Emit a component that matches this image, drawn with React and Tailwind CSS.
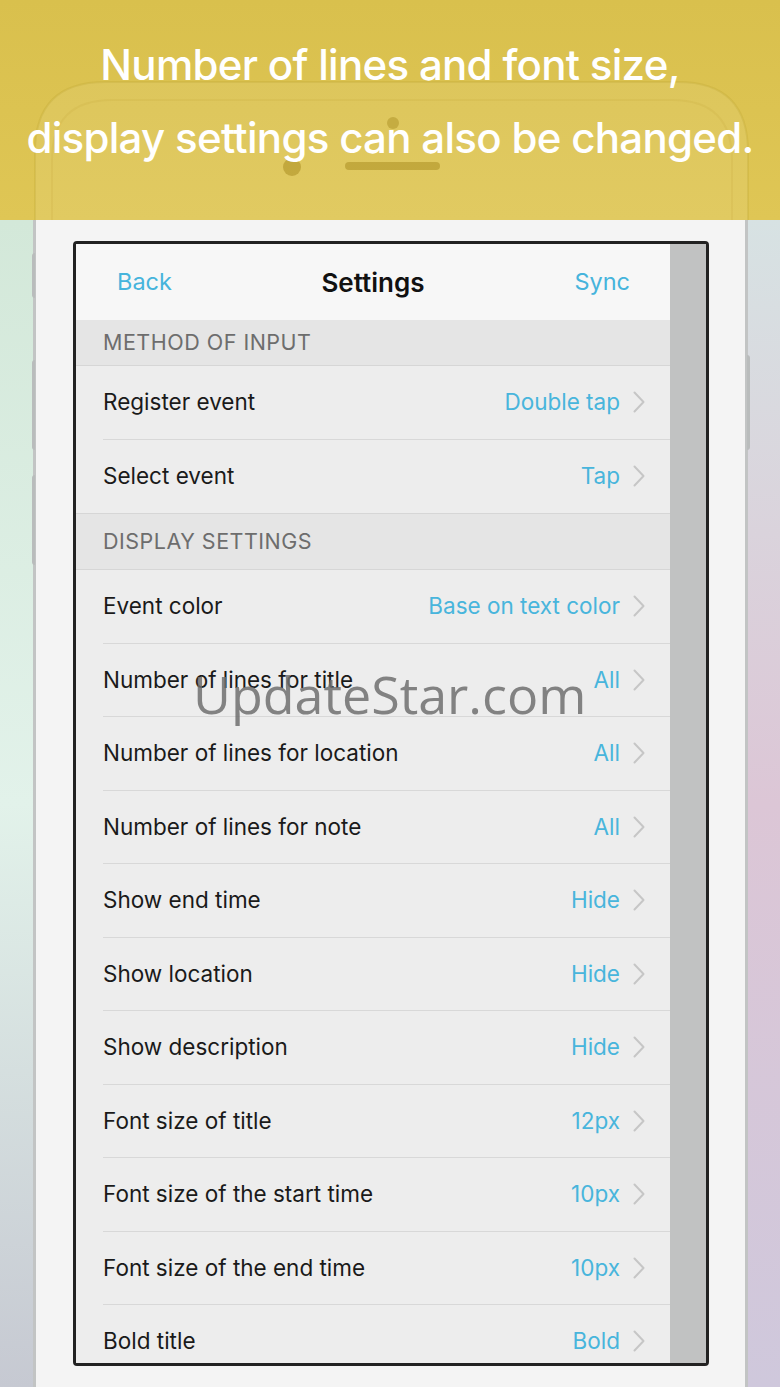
const methodRows = [
  ["Register event", "Double tap"],
  ["Select event", "Tap"],
];

const displayRows = [
  ["Event color", "Base on text color"],
  ["Number of lines for title", "All"],
  ["Number of lines for location", "All"],
  ["Number of lines for note", "All"],
  ["Show end time", "Hide"],
  ["Show location", "Hide"],
  ["Show description", "Hide"],
  ["Font size of title", "12px"],
  ["Font size of the start time", "10px"],
  ["Font size of the end time", "10px"],
  ["Bold title", "Bold"],
];

function Chevron() {
  return (
    <svg width="12" height="22" viewBox="0 0 12 22" className="shrink-0">
      <polyline points="1.5,1.5 10.5,11 1.5,20.5" fill="none" stroke="#c6c6c6" strokeWidth="2" strokeLinecap="round" strokeLinejoin="round" />
    </svg>
  );
}

function SectionHeader({ title, tall }) {
  return (
    <div
      className={`flex shrink-0 items-center border-b border-[#d6d6d6] bg-[#e5e5e5] pl-[27px] text-[21.5px] tracking-[0.5px] text-[#6d6d6d] ${
        tall ? "h-[57px] border-t" : "h-[46px]"
      }`}
    >
      {title}
    </div>
  );
}

function Row({ label, value, last }) {
  return (
    <div className="h-[73.5px] shrink-0 bg-[#ededed] pl-[27px]">
      <div
        className={`flex h-full items-center justify-between pr-[25px] ${
          last ? "" : "border-b border-[#d8d8d8]"
        }`}
      >
        <span className="text-[22.5px] text-[#1a1a1a]">{label}</span>
        <span className="flex items-center gap-[13px]">
          <span className="text-[22.5px] text-[#48b5dc]">{value}</span>
          <Chevron />
        </span>
      </div>
    </div>
  );
}

export default function App() {
  return (
    <div
      className="relative h-[1387px] w-[780px] overflow-hidden bg-[#d8dcdc]"
      style={{ fontFamily: "Inter, 'Open Sans', sans-serif" }}
    >
      {/* top caption */}
      <div className="relative h-[220px] overflow-hidden bg-linear-to-b from-[#d9c04d] to-[#dfc655]">
        <svg className="absolute inset-0" width="780" height="220" viewBox="0 0 780 220">
          <path d="M35 260 V152 Q35 82 105 82 H678 Q748 82 748 152 V260" fill="rgba(255,255,255,0.07)" stroke="rgba(150,120,0,0.12)" strokeWidth="2" />
          <path d="M52 260 V160 Q52 100 112 100 H672 Q732 100 732 160 V260" fill="none" stroke="rgba(150,120,0,0.07)" strokeWidth="2" />
          <rect x="345" y="162" width="95" height="8" rx="4" fill="rgba(140,110,0,0.35)" />
          <circle cx="292" cy="167" r="9" fill="rgba(140,110,0,0.35)" />
          <circle cx="393" cy="123" r="6" fill="rgba(140,110,0,0.3)" />
        </svg>
        <div className="relative flex flex-col items-center pt-[28px] text-[42px] leading-[73px] font-medium tracking-[-0.7px] text-white">
          <p>Number of lines and font size,</p>
          <p>display settings can also be changed.</p>
        </div>
      </div>

      {/* phone area */}
      <div className="flex h-[1167px]">
        <div className="w-[33px] shrink-0 bg-linear-to-b from-[#d3e8d9] via-[#e2f2ea] to-[#c6c9d2]" />
        <div className="relative w-[715px] shrink-0 border-x-[3px] border-x-[#c2c4c4] bg-[#f4f4f4] pt-[21px] pl-[37px] pr-[36px]">
          {/* side buttons */}
          <div className="absolute -left-[4px] top-[33px] h-[45px] w-[3px] rounded-l-sm bg-[#b9bcbc]" />
          <div className="absolute -left-[4px] top-[140px] h-[90px] w-[3px] rounded-l-sm bg-[#b9bcbc]" />
          <div className="absolute -left-[4px] top-[255px] h-[90px] w-[3px] rounded-l-sm bg-[#b9bcbc]" />
          <div className="absolute -right-[5px] top-[135px] h-[95px] w-[3px] rounded-r-sm bg-[#b9bcbc]" />

          {/* screen */}
          <div className="flex h-[1125px] overflow-hidden rounded-[4px] border-[3px] border-[#222]">
            <div className="flex w-[594px] flex-col overflow-hidden bg-[#ededed]">
              <div className="relative flex h-[76px] shrink-0 items-center justify-between bg-[#f7f7f7] px-[40px] text-[23.5px]">
                <span className="pl-[1px] text-[#46b4dc]">Back</span>
                <span className="absolute left-1/2 -translate-x-1/2 text-[26px] font-semibold text-[#111]">
                  Settings
                </span>
                <span className="text-[#46b4dc]">Sync</span>
              </div>
              <SectionHeader title="METHOD OF INPUT" />
              {methodRows.map(([l, v], i) => (
                <Row key={l} label={l} value={v} last={i === methodRows.length - 1} />
              ))}
              <SectionHeader title="DISPLAY SETTINGS" tall />
              {displayRows.map(([l, v]) => (
                <Row key={l} label={l} value={v} />
              ))}
            </div>
            <div className="flex-1 bg-[#c1c2c2]" />
          </div>
        </div>
        <div className="w-[32px] shrink-0 bg-linear-to-b from-[#d7e2e3] via-[#dcc6d6] to-[#cfc8dc]" />
      </div>

      {/* watermark */}
      <div
        className="pointer-events-none absolute left-[193px] top-[668px] text-[52px] leading-none text-[#6e6e6e]/85"
        style={{ fontFamily: "'Open Sans', 'Noto Sans', sans-serif" }}
      >
        UpdateStar.com
      </div>
    </div>
  );
}
